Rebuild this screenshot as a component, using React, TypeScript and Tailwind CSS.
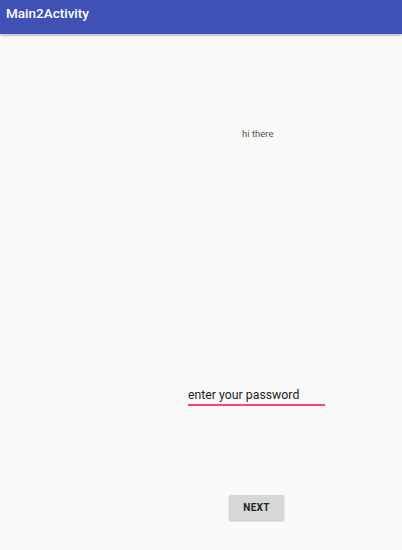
export default function App() {
  return (
    <div className="w-[402px] h-[550px] bg-[#fafafa] flex flex-col overflow-hidden" style={{ fontFamily: 'Roboto, "Noto Sans", sans-serif' }}>
      {/* Toolbar */}
      <div className="h-[34px] bg-[#3f51b5] flex items-center px-[6px] shadow-[0_1px_3px_rgba(0,0,0,0.35)] relative z-10">
        <span className="text-white text-[13.5px] font-medium leading-none -mt-[6px]">Main2Activity</span>
      </div>

      <div className="flex flex-col flex-1">
        <div className="mt-[93px] pl-[242px] text-[9.5px] text-[#555] leading-[14px]">hi there</div>

        <div className="mt-[247px] ml-[188px] w-[137px]">
          <div className="text-[12.3px] text-[#222] leading-[15px]">enter your password</div>
          <div className="mt-[1px] h-[1.5px] bg-[#ff4081]" />
        </div>

        <div className="mt-[88px] ml-[229px]">
          <button className="w-[55px] h-[25px] bg-[#d6d7d7] rounded-[2px] shadow-[0_1px_2px_rgba(0,0,0,0.25)] text-[10px] font-bold text-[#222] tracking-[0.3px]">
            NEXT
          </button>
        </div>
      </div>
    </div>
  );
}
